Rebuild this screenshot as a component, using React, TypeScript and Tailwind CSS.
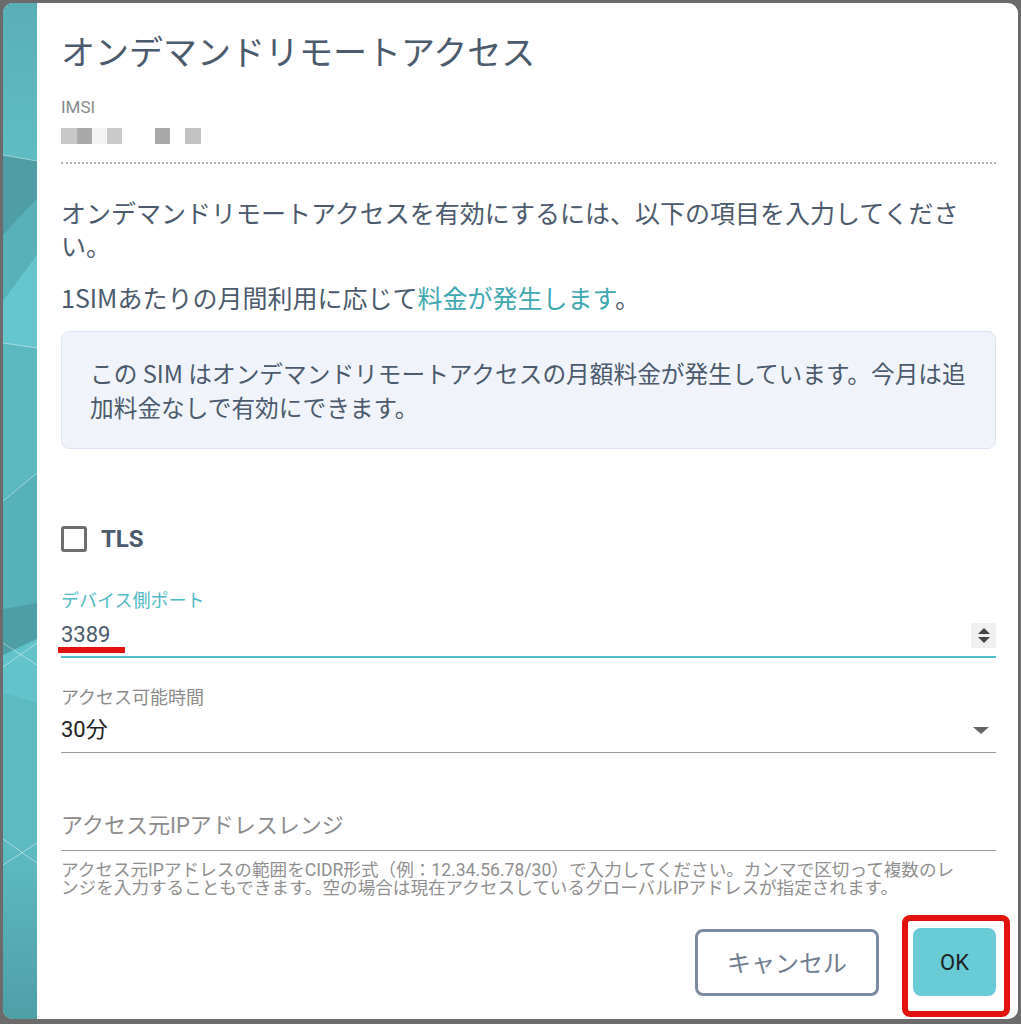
import React from "react";

const roboto = "font-['Roboto','Noto_Sans_CJK_JP',sans-serif]";
const noto = "font-['Noto_Sans_CJK_JP','Noto_Sans',sans-serif]";

function Stripe() {
  return (
    <svg
      className="h-full w-full"
      viewBox="0 0 34 1016"
      preserveAspectRatio="none"
    >
      <defs>
        <linearGradient id="bottomFade" x1="0" y1="0" x2="0" y2="1">
          <stop offset="0" stopColor="#5ebbc2" />
          <stop offset="1" stopColor="#4f9fa7" />
        </linearGradient>
        <linearGradient id="topFade" x1="0" y1="0" x2="0" y2="1">
          <stop offset="0" stopColor="#5aafb7" />
          <stop offset="1" stopColor="#5fbcc3" />
        </linearGradient>
      </defs>
      <rect x="0" y="0" width="34" height="1016" fill="#5cb8c0" />
      <polygon points="0,0 34,0 34,158 0,152" fill="url(#topFade)" />
      <polygon points="0,152 34,158 34,196 0,232" fill="#4f9da5" />
      <polygon points="0,232 34,196 34,252 0,298" fill="#58b1b9" />
      <polygon points="0,298 34,252 34,345 0,340" fill="#66c6cd" />
      <polygon points="0,340 34,345 34,470 0,498" fill="#5cb8bf" />
      <polygon points="0,498 34,470 34,600 0,606" fill="#57b1b9" />
      <polygon points="0,606 34,600 34,636 0,652" fill="#4e9ea6" />
      <polygon points="0,652 34,636 34,700 0,690" fill="#63c3ca" />
      <polygon points="0,690 34,700 34,840 0,846" fill="#5dbac1" />
      <polygon points="0,846 34,840 34,1016 0,1016" fill="url(#bottomFade)" />
      <g stroke="#ffffff" strokeOpacity="0.45" strokeWidth="1" fill="none">
        <line x1="0" y1="152" x2="34" y2="158" />
        <line x1="0" y1="340" x2="34" y2="345" />
        <line x1="0" y1="498" x2="34" y2="470" />
        <line x1="0" y1="640" x2="34" y2="662" />
        <line x1="0" y1="664" x2="34" y2="640" />
        <line x1="0" y1="836" x2="34" y2="860" />
        <line x1="0" y1="862" x2="34" y2="840" />
      </g>
    </svg>
  );
}

export default function App() {
  return (
    <div className="min-h-screen w-full bg-[#6b6b6b] p-[3px]">
      <div className="flex h-[1016px] overflow-hidden rounded-[10px] bg-white">
        <aside className="w-[34px] shrink-0">
          <Stripe />
        </aside>

        <main className="flex flex-1 flex-col pt-[30px] pr-[22px] pb-[23px] pl-6">
          <h1
            className={`${roboto} text-[34px] leading-[40px] font-normal text-[#4b5a6d]`}
          >
            オンデマンドリモートアクセス
          </h1>

          <div
            className={`${roboto} mt-6 text-[17px] leading-5 text-[#8a8a8a]`}
          >
            IMSI
          </div>
          <div className="mt-[11px] flex h-4">
            <span className="w-4 bg-[#c8c8c8]" />
            <span className="w-[15px] bg-[#a9a9a9]" />
            <span className="w-[15px] bg-[#f4f4f4]" />
            <span className="w-[15px] bg-[#c9c9c9]" />
            <span className="ml-[33px] w-[15px] bg-[#a8a8a8]" />
            <span className="ml-[15px] w-4 bg-[#c2c2c2]" />
          </div>

          <div className="mt-[18px] border-t-2 border-dotted border-[#b4b4b4]" />

          <p
            className={`${noto} mt-8 text-[25px] leading-[33px] text-[#4b5a6d]`}
          >
            オンデマンドリモートアクセスを有効にするには、以下の項目を入力してください。
          </p>
          <p
            className={`${noto} mt-[19px] text-[25px] leading-[33px] text-[#4b5a6d]`}
          >
            1SIMあたりの月間利用に応じて
            <span className="text-[#3ea8b1]">料金が発生します</span>。
          </p>

          <div
            className={`${noto} mt-[17px] rounded-lg border border-[#dde5f3] bg-[#f0f4fa] py-6 pr-6 pl-7 text-[23.7px] leading-[34px] text-[#4b5a6d]`}
          >
            この SIM はオンデマンドリモートアクセスの月額料金が発生しています。今月は追加料金なしで有効にできます。
          </div>

          <label className="mt-[76px] flex items-center gap-[14px]">
            <span className="h-[26px] w-[26px] rounded-[3px] border-[3px] border-[#6e6e6e]" />
            <span
              className={`${roboto} text-[24px] leading-[28px] font-bold text-[#4b5a6d]`}
            >
              TLS
            </span>
          </label>

          <div className="relative mt-9 border-b-2 border-[#4fc1ca] pb-[6px]">
            <div
              className={`${roboto} text-[18px] leading-6 text-[#4fb9c3]`}
            >
              デバイス側ポート
            </div>
            <div className="mt-[7px] flex items-center justify-between">
              <span
                className={`${roboto} text-[22px] leading-[30px] text-[#4b5a6d]`}
              >
                3389
              </span>
              <span className="flex h-[25px] w-[25px] flex-col items-center justify-center gap-[3px] bg-[#f0f0f0]">
                <svg width="12" height="6" viewBox="0 0 12 6">
                  <polygon points="6,0 12,6 0,6" fill="#444" />
                </svg>
                <svg width="12" height="6" viewBox="0 0 12 6">
                  <polygon points="0,0 12,0 6,6" fill="#444" />
                </svg>
              </span>
            </div>
            <span className="absolute bottom-[3px] -left-[3px] h-[6px] w-[67px] bg-[#e2130f]" />
          </div>

          <div className="mt-7 border-b border-[#9a9a9a] pb-[7px]">
            <div
              className={`${roboto} text-[18px] leading-6 text-[#8a8a8a]`}
            >
              アクセス可能時間
            </div>
            <div className="mt-[5px] flex items-center justify-between">
              <span
                className={`${roboto} text-[22px] leading-[30px] text-[#222222]`}
              >
                30分
              </span>
              <svg width="16" height="7" viewBox="0 0 16 7" className="mr-[7px]">
                <polygon points="0,0 16,0 8,7" fill="#666666" />
              </svg>
            </div>
          </div>

          <div className="mt-[58px] border-b border-[#9a9a9a] pb-[9px]">
            <div
              className={`${roboto} text-[22px] leading-[30px] text-[#8c8c8c]`}
            >
              アクセス元IPアドレスレンジ
            </div>
          </div>
          <p
            className={`${roboto} mt-[10px] mr-[28px] text-[17.6px] leading-[18px] text-[#8f8f8f]`}
          >
            アクセス元IPアドレスの範囲をCIDR形式（例：12.34.56.78/30）で入力してください。カンマで区切って複数のレンジを入力することもできます。空の場合は現在アクセスしているグローバルIPアドレスが指定されます。
          </p>

          <div className="mt-auto flex items-center justify-end gap-[34px]">
            <button
              className={`${noto} h-[67px] w-[184px] rounded-lg border-[3px] border-[#7d8ba0] bg-white text-[24px] text-[#6f7d8f]`}
            >
              キャンセル
            </button>
            <div className="relative">
              <button
                className={`${roboto} h-[68px] w-[83px] rounded-lg bg-[#69cbd6] text-[22px] text-[#222222]`}
              >
                OK
              </button>
              <span className="pointer-events-none absolute -top-[13px] -right-[14px] -bottom-[21px] -left-[11px] rounded-[8px] border-[6px] border-[#e2130f]" />
            </div>
          </div>
        </main>
      </div>
    </div>
  );
}
